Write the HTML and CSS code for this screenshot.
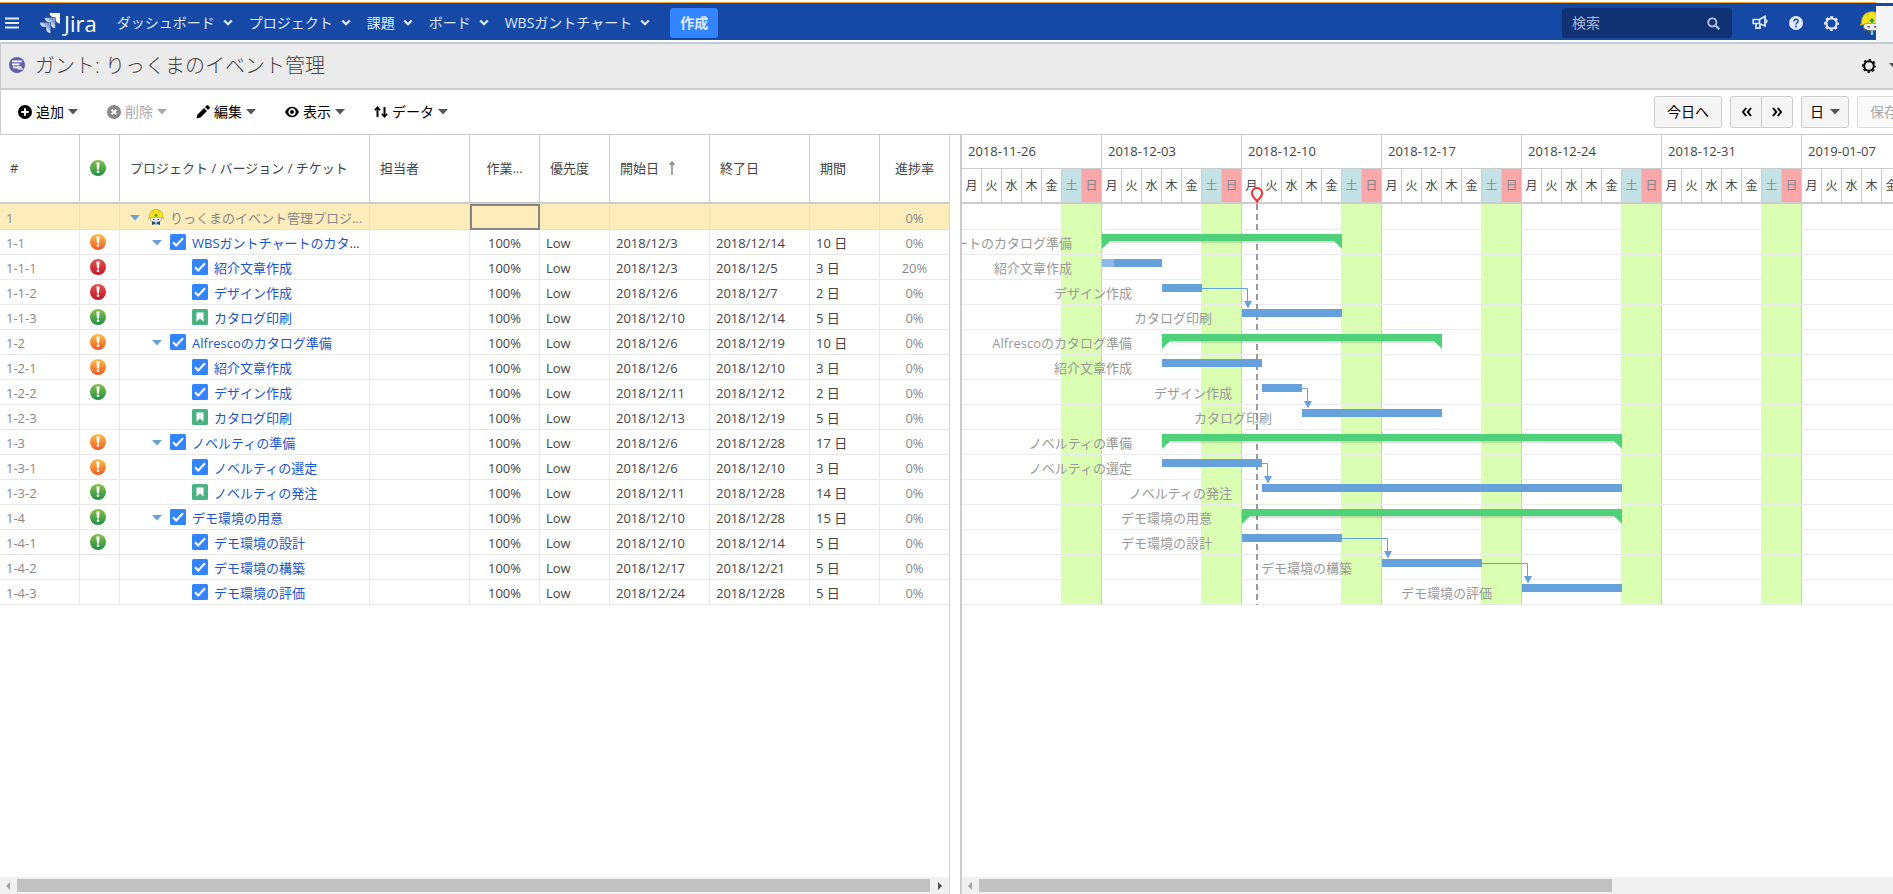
FILE: index.html
```html
<!DOCTYPE html>
<html lang="ja">
<head>
<meta charset="utf-8">
<title>ガント: りっくまのイベント管理</title>
<link rel="stylesheet" href="styles.css">
</head>
<body>
<svg class="defs" aria-hidden="true">
  <defs>
    <linearGradient id="g-green" x1="0" y1="0" x2="0" y2="1"><stop offset="0" stop-color="#8cc04b"/><stop offset="1" stop-color="#1d8f45"/></linearGradient>
    <linearGradient id="g-orange" x1="0" y1="0" x2="0" y2="1"><stop offset="0" stop-color="#fbc04a"/><stop offset="1" stop-color="#ef5a24"/></linearGradient>
    <linearGradient id="g-red" x1="0" y1="0" x2="0" y2="1"><stop offset="0" stop-color="#e2564f"/><stop offset="1" stop-color="#c3142a"/></linearGradient>
    <symbol id="mark" viewBox="0 0 16 16"><path fill="#fff" d="M6.4 2.6h3.2L9 9.4H7z"/><rect x="6.8" y="10.4" width="2.4" height="2.4" rx=".6" fill="#fff"/></symbol>
    <symbol id="ok" viewBox="0 0 16 16"><circle cx="8" cy="8" r="8" fill="url(#g-green)"/><use href="#mark"/></symbol>
    <symbol id="warn" viewBox="0 0 16 16"><circle cx="8" cy="8" r="8" fill="url(#g-orange)"/><use href="#mark"/></symbol>
    <symbol id="late" viewBox="0 0 16 16"><circle cx="8" cy="8" r="8" fill="url(#g-red)"/><use href="#mark"/></symbol>
    <symbol id="task" viewBox="0 0 16 16"><rect width="16" height="16" rx="1.5" fill="#3384ff"/><path d="M3 8.2l3.2 3.3L13 4.2" fill="none" stroke="#fff" stroke-width="2.1"/></symbol>
    <symbol id="story" viewBox="0 0 16 16"><rect width="16" height="16" rx="1.5" fill="#4bb283"/><path d="M4.5 3.6h7v9L8 9.4l-3.5 3.2z" fill="#fff"/><path d="M6.5 5.6h3v3.2L8 7.5 6.500 8.800z" fill="#fff"/></symbol>
    <symbol id="helmet" viewBox="0 0 16 16">
      <path d="M2.500 8h11v3.500L11 13H5l-2.500-1.500z" fill="#eee" stroke="#777" stroke-width=".5"/>
      <path d="M1 8.200C1 3 4 .5 8 .5s7 2.500 7 7.700l1 1.300c-5-1.800-11-1.800-16 0z" fill="#f6e620" stroke="#b5a41c" stroke-width=".6"/>
      <path d="M5.300 1.500v3M10.700 1.500v3" stroke="#b5a41c" stroke-width=".6"/>
      <path d="M8 4.800v3M6.500 6.300h3" stroke="#2ea043" stroke-width="1.300"/>
      <path d="M5 10.500h1.500M9.500 10.500H11" stroke="#444" stroke-width="1"/>
      <path d="M4 12.300l4 1.500 4-1.500V16l-3-1-1 .8-1-.8-3 1z" fill="#254a78"/><path d="M7.200 13h1.600v3H7.200z" fill="#7cc4d8"/>
    </symbol>
    <symbol id="caret" viewBox="0 0 10 6"><path d="M0 0h10L5 5.500z" fill="currentColor"/></symbol>
    <symbol id="chev" viewBox="0 0 10 8"><path d="M1.200 1.500L5 5.300l3.800-3.800" fill="none" stroke="currentColor" stroke-width="2.200"/></symbol>
    <symbol id="gear" viewBox="0 0 14 14"><circle cx="7" cy="7" r="4.800" fill="none" stroke="currentColor" stroke-width="2"/><circle cx="7" cy="7" r="6.200" fill="none" stroke="currentColor" stroke-width="1.600" stroke-dasharray="2.500 2.370" stroke-dashoffset="1.200"/></symbol>
  </defs>
</svg>

<header class="nav">
  <button class="nav-icon menu" aria-label="メニュー"><svg width="14" height="12" viewBox="0 0 14 12"><path d="M0 1.500h14M0 6h14M0 10.500h14" stroke="currentColor" stroke-width="2"/></svg></button>
  <a class="logo" href="#"><svg width="20" height="20" viewBox="0 0 24 24"><defs><linearGradient id="j1" x1="1" y1="0" x2="0" y2="1"><stop offset=".25" stop-color="#fff" stop-opacity=".45"/><stop offset=".65" stop-color="#fff"/></linearGradient></defs><path fill="url(#j1)" d="M11.571 11.513H0a5.218 5.218 0 0 0 5.232 5.215h2.130v2.057A5.215 5.215 0 0 0 12.575 24V12.518a1.005 1.005 0 0 0-1.005-1.005z"/><path fill="url(#j1)" d="M17.294 5.757H5.736a5.215 5.215 0 0 0 5.215 5.214h2.129v2.058a5.218 5.218 0 0 0 5.215 5.214V6.758a1.001 1.001 0 0 0-1.001-1.001z"/><path fill="#fff" d="M23.013 0H11.455a5.215 5.215 0 0 0 5.215 5.215h2.129v2.057A5.215 5.215 0 0 0 24 12.483V1.005A1.001 1.001 0 0 0 23.013 0z"/></svg><span>Jira</span></a>
  <nav class="nav-links">
    <a href="#">ダッシュボード<svg width="10" height="8"><use href="#chev"/></svg></a>
    <a href="#">プロジェクト<svg width="10" height="8"><use href="#chev"/></svg></a>
    <a href="#">課題<svg width="10" height="8"><use href="#chev"/></svg></a>
    <a href="#">ボード<svg width="10" height="8"><use href="#chev"/></svg></a>
    <a href="#">WBSガントチャート<svg width="10" height="8"><use href="#chev"/></svg></a>
  </nav>
  <button class="create">作成</button>
  <div class="search">
    <input type="text" placeholder="検索" aria-label="検索">
    <svg width="13" height="13" viewBox="0 0 13 13"><circle cx="5.300" cy="5.300" r="4.100" fill="none" stroke="currentColor" stroke-width="2.100"/><path d="M8.300 8.300l4 4" stroke="currentColor" stroke-width="2.500"/></svg>
  </div>
  <div class="nav-tools">
    <button class="nav-icon" aria-label="フィードバック"><svg width="16" height="16" viewBox="0 0 16 16"><path d="M1.200 4.500h6.300l5.500-3v9.500l-5.500-2.500H1.200zM7.500 4.500v4M4 8.500v4.700h4V8.700" fill="none" stroke="currentColor" stroke-width="1.700"/><path d="M13.700 4.800c1.600.3 1.600 2.700 0 3" fill="none" stroke="currentColor" stroke-width="1.400"/></svg></button>
    <button class="nav-icon" aria-label="ヘルプ"><svg width="14" height="14" viewBox="0 0 14 14"><circle cx="7" cy="7" r="7" fill="currentColor"/><path d="M4.900 5.400c0-2.800 4.200-2.600 4.200-.2C9.100 6.800 7 6.700 7 8.600" fill="none" stroke="#1549a5" stroke-width="1.500"/><circle cx="7" cy="10.600" r="1" fill="#1549a5"/></svg></button>
    <button class="nav-icon" aria-label="設定"><svg width="15" height="15"><use href="#gear"/></svg></button>
    <button class="nav-icon" aria-label="プロフィール"><svg width="24" height="24"><use href="#helmet"/></svg></button>
  </div>
  <div class="edge"></div>
</header>

<section class="title-bar">
  <svg width="16" height="16" viewBox="0 0 16 16"><circle cx="8" cy="8" r="8" fill="#6260ac"/><path d="M3 4.400h10M3 7.400h7.500" stroke="#fff" stroke-width="1.800"/><path d="M5 8.500v2h4M8.700 9.800h3l1.300 2H9.500z" fill="none" stroke="#fff" stroke-width="1.300"/></svg>
  <h1>ガント: りっくまのイベント管理</h1>
  <button class="plain settings" aria-label="ガント設定"><svg width="14" height="14"><use href="#gear"/></svg><svg class="grey" width="10" height="6"><use href="#caret"/></svg></button>
</section>

<section class="toolbar">
  <button class="plain"><svg width="14" height="14" viewBox="0 0 14 14"><circle cx="7" cy="7" r="7"/><path d="M7 3.300v7.400M3.300 7h7.400" stroke="#fff" stroke-width="2"/></svg>追加<svg class="grey" width="10" height="6"><use href="#caret"/></svg></button>
  <button class="plain" disabled><svg width="14" height="14" viewBox="0 0 14 14"><circle cx="7" cy="7" r="7" fill="#888"/><path d="M4.600 4.600l4.800 4.800M9.400 4.600L4.600 9.400" stroke="#fff" stroke-width="2"/></svg>削除<svg width="10" height="6"><use href="#caret"/></svg></button>
  <button class="plain"><svg width="14" height="14" viewBox="0 0 14 14"><path d="M.5 13.500l1-4L8 3l3 3-6.500 6.500zM9 2l1.500-1.500c.5-.5 1.200-.5 1.700 0l1.300 1.300c.5.5.5 1.200 0 1.700L12 5z"/></svg>編集<svg class="grey" width="10" height="6"><use href="#caret"/></svg></button>
  <button class="plain"><svg width="14" height="14" viewBox="0 0 14 14"><path d="M0 7c3-7 11-7 14 0-3 7-11 7-14 0z"/><circle cx="7" cy="7" r="2.800" fill="none" stroke="#fff" stroke-width="1.700"/></svg>表示<svg class="grey" width="10" height="6"><use href="#caret"/></svg></button>
  <button class="plain"><svg width="14" height="14" viewBox="0 0 14 14"><path d="M3.500 12V3M10.500 2v9" stroke="#000" stroke-width="2"/><path d="M.8 5.300L3.500 2.200l2.700 3.100M7.800 8.700l2.700 3.100 2.700-3.100" fill="none" stroke="#000" stroke-width="1.700"/></svg>データ<svg class="grey" width="10" height="6"><use href="#caret"/></svg></button>
  <div class="range">
    <button class="btn today-btn">今日へ</button>
    <div class="pair">
      <button class="btn" aria-label="前へ"><svg width="11" height="10" viewBox="0 0 11 10"><path d="M5.200 1L2 5l3.200 4M10 1L6.800 5 10 9" fill="none" stroke="#000" stroke-width="2"/></svg></button>
      <button class="btn" aria-label="次へ"><svg width="11" height="10" viewBox="0 0 11 10"><path d="M1 1l3.200 4L1 9M5.800 1L9 5 5.800 9" fill="none" stroke="#000" stroke-width="2"/></svg></button>
    </div>
    <button class="btn unit">日<svg class="grey" width="10" height="6"><use href="#caret"/></svg></button>
    <button class="btn save" disabled>保存</button>
  </div>
</section>

<main class="panes">
  <section class="grid-pane">
    <table class="grid">
      <colgroup><col class="w80"><col class="w40"><col class="w250"><col class="w100"><col class="w70"><col class="w70"><col class="w100"><col class="w100"><col class="w70"><col></colgroup>
      <thead>
        <tr><th>#</th><th><svg class="status" width="16" height="16"><use href="#ok"/></svg></th><th>プロジェクト / バージョン / チケット</th><th>担当者</th><th class="mid">作業...</th><th>優先度</th><th><span class="sorted">開始日<svg width="6" height="14" viewBox="0 0 6 14"><path d="M3 14V2M.5 4L3 1l2.500 3" fill="none" stroke="#888" stroke-width="1.500"/></svg></span></th><th>終了日</th><th>期間</th><th class="mid">進捗率</th></tr>
      </thead>
      <tbody>
        <tr class="selected"><td>1</td><td></td><td><div class="name l0"><svg class="twist" width="10" height="6"><use href="#caret"/></svg><svg width="16" height="16"><use href="#helmet"/></svg><span>りっくまのイベント管理プロジェクト</span></div></td><td></td><td class="cursor"></td><td></td><td></td><td></td><td></td><td>0%</td></tr>
        <tr><td>1-1</td><td><svg class="status" width="16" height="16"><use href="#warn"/></svg></td><td><div class="name l1"><svg class="twist" width="10" height="6"><use href="#caret"/></svg><svg width="16" height="16"><use href="#task"/></svg><span><a href="#">WBSガントチャートのカタログ準備</a></span></div></td><td></td><td>100%</td><td>Low</td><td>2018/12/3</td><td>2018/12/14</td><td>10 日</td><td>0%</td></tr>
        <tr><td>1-1-1</td><td><svg class="status" width="16" height="16"><use href="#late"/></svg></td><td><div class="name l2"><svg width="16" height="16"><use href="#task"/></svg><span><a href="#">紹介文章作成</a></span></div></td><td></td><td>100%</td><td>Low</td><td>2018/12/3</td><td>2018/12/5</td><td>3 日</td><td>20%</td></tr>
        <tr><td>1-1-2</td><td><svg class="status" width="16" height="16"><use href="#late"/></svg></td><td><div class="name l2"><svg width="16" height="16"><use href="#task"/></svg><span><a href="#">デザイン作成</a></span></div></td><td></td><td>100%</td><td>Low</td><td>2018/12/6</td><td>2018/12/7</td><td>2 日</td><td>0%</td></tr>
        <tr><td>1-1-3</td><td><svg class="status" width="16" height="16"><use href="#ok"/></svg></td><td><div class="name l2"><svg width="16" height="16"><use href="#story"/></svg><span><a href="#">カタログ印刷</a></span></div></td><td></td><td>100%</td><td>Low</td><td>2018/12/10</td><td>2018/12/14</td><td>5 日</td><td>0%</td></tr>
        <tr><td>1-2</td><td><svg class="status" width="16" height="16"><use href="#warn"/></svg></td><td><div class="name l1"><svg class="twist" width="10" height="6"><use href="#caret"/></svg><svg width="16" height="16"><use href="#task"/></svg><span><a href="#">Alfrescoのカタログ準備</a></span></div></td><td></td><td>100%</td><td>Low</td><td>2018/12/6</td><td>2018/12/19</td><td>10 日</td><td>0%</td></tr>
        <tr><td>1-2-1</td><td><svg class="status" width="16" height="16"><use href="#warn"/></svg></td><td><div class="name l2"><svg width="16" height="16"><use href="#task"/></svg><span><a href="#">紹介文章作成</a></span></div></td><td></td><td>100%</td><td>Low</td><td>2018/12/6</td><td>2018/12/10</td><td>3 日</td><td>0%</td></tr>
        <tr><td>1-2-2</td><td><svg class="status" width="16" height="16"><use href="#ok"/></svg></td><td><div class="name l2"><svg width="16" height="16"><use href="#task"/></svg><span><a href="#">デザイン作成</a></span></div></td><td></td><td>100%</td><td>Low</td><td>2018/12/11</td><td>2018/12/12</td><td>2 日</td><td>0%</td></tr>
        <tr><td>1-2-3</td><td></td><td><div class="name l2"><svg width="16" height="16"><use href="#story"/></svg><span><a href="#">カタログ印刷</a></span></div></td><td></td><td>100%</td><td>Low</td><td>2018/12/13</td><td>2018/12/19</td><td>5 日</td><td>0%</td></tr>
        <tr><td>1-3</td><td><svg class="status" width="16" height="16"><use href="#warn"/></svg></td><td><div class="name l1"><svg class="twist" width="10" height="6"><use href="#caret"/></svg><svg width="16" height="16"><use href="#task"/></svg><span><a href="#">ノベルティの準備</a></span></div></td><td></td><td>100%</td><td>Low</td><td>2018/12/6</td><td>2018/12/28</td><td>17 日</td><td>0%</td></tr>
        <tr><td>1-3-1</td><td><svg class="status" width="16" height="16"><use href="#warn"/></svg></td><td><div class="name l2"><svg width="16" height="16"><use href="#task"/></svg><span><a href="#">ノベルティの選定</a></span></div></td><td></td><td>100%</td><td>Low</td><td>2018/12/6</td><td>2018/12/10</td><td>3 日</td><td>0%</td></tr>
        <tr><td>1-3-2</td><td><svg class="status" width="16" height="16"><use href="#ok"/></svg></td><td><div class="name l2"><svg width="16" height="16"><use href="#story"/></svg><span><a href="#">ノベルティの発注</a></span></div></td><td></td><td>100%</td><td>Low</td><td>2018/12/11</td><td>2018/12/28</td><td>14 日</td><td>0%</td></tr>
        <tr><td>1-4</td><td><svg class="status" width="16" height="16"><use href="#ok"/></svg></td><td><div class="name l1"><svg class="twist" width="10" height="6"><use href="#caret"/></svg><svg width="16" height="16"><use href="#task"/></svg><span><a href="#">デモ環境の用意</a></span></div></td><td></td><td>100%</td><td>Low</td><td>2018/12/10</td><td>2018/12/28</td><td>15 日</td><td>0%</td></tr>
        <tr><td>1-4-1</td><td><svg class="status" width="16" height="16"><use href="#ok"/></svg></td><td><div class="name l2"><svg width="16" height="16"><use href="#task"/></svg><span><a href="#">デモ環境の設計</a></span></div></td><td></td><td>100%</td><td>Low</td><td>2018/12/10</td><td>2018/12/14</td><td>5 日</td><td>0%</td></tr>
        <tr><td>1-4-2</td><td></td><td><div class="name l2"><svg width="16" height="16"><use href="#task"/></svg><span><a href="#">デモ環境の構築</a></span></div></td><td></td><td>100%</td><td>Low</td><td>2018/12/17</td><td>2018/12/21</td><td>5 日</td><td>0%</td></tr>
        <tr><td>1-4-3</td><td></td><td><div class="name l2"><svg width="16" height="16"><use href="#task"/></svg><span><a href="#">デモ環境の評価</a></span></div></td><td></td><td>100%</td><td>Low</td><td>2018/12/24</td><td>2018/12/28</td><td>5 日</td><td>0%</td></tr>
      </tbody>
    </table>
    <div class="scroll">
      <svg class="arrow dim" width="4" height="8" viewBox="0 0 4 8"><path d="M4 0v8L0 4z" fill="currentColor"/></svg>
      <div class="thumb full"></div>
      <svg class="arrow" width="4" height="8" viewBox="0 0 4 8"><path d="M0 0v8l4-4z" fill="currentColor"/></svg>
    </div>
  </section>

  <section class="chart-pane">
    <div class="calendar">
      <div class="week"><div class="date">2018-11-26</div><div class="days"><span>月</span><span>火</span><span>水</span><span>木</span><span>金</span><span class="sat">土</span><span class="sun">日</span></div></div>
      <div class="week"><div class="date">2018-12-03</div><div class="days"><span>月</span><span>火</span><span>水</span><span>木</span><span>金</span><span class="sat">土</span><span class="sun">日</span></div></div>
      <div class="week"><div class="date">2018-12-10</div><div class="days"><span>月</span><span>火</span><span>水</span><span>木</span><span>金</span><span class="sat">土</span><span class="sun">日</span></div></div>
      <div class="week"><div class="date">2018-12-17</div><div class="days"><span>月</span><span>火</span><span>水</span><span>木</span><span>金</span><span class="sat">土</span><span class="sun">日</span></div></div>
      <div class="week"><div class="date">2018-12-24</div><div class="days"><span>月</span><span>火</span><span>水</span><span>木</span><span>金</span><span class="sat">土</span><span class="sun">日</span></div></div>
      <div class="week"><div class="date">2018-12-31</div><div class="days"><span>月</span><span>火</span><span>水</span><span>木</span><span>金</span><span class="sat">土</span><span class="sun">日</span></div></div>
      <div class="week"><div class="date">2019-01-07</div><div class="days"><span>月</span><span>火</span><span>水</span><span>木</span><span>金</span></div></div>
    </div>
    <div class="canvas">
      <div class="row first"></div>
      <div class="row" style="--start:7;--days:12"><span class="label">WBSガントチャートのカタログ準備</span><i class="bar group"></i></div>
      <div class="row" style="--start:7;--days:3"><span class="label">紹介文章作成</span><i class="bar"><b class="done" style="width:20%"></b></i></div>
      <div class="row" style="--start:10;--days:2"><span class="label">デザイン作成</span><i class="bar"></i></div>
      <div class="row" style="--start:14;--days:5"><span class="label">カタログ印刷</span><i class="bar"></i></div>
      <div class="row" style="--start:10;--days:14"><span class="label">Alfrescoのカタログ準備</span><i class="bar group"></i></div>
      <div class="row" style="--start:10;--days:5"><span class="label">紹介文章作成</span><i class="bar"></i></div>
      <div class="row" style="--start:15;--days:2"><span class="label">デザイン作成</span><i class="bar"></i></div>
      <div class="row" style="--start:17;--days:7"><span class="label">カタログ印刷</span><i class="bar"></i></div>
      <div class="row" style="--start:10;--days:23"><span class="label">ノベルティの準備</span><i class="bar group"></i></div>
      <div class="row" style="--start:10;--days:5"><span class="label">ノベルティの選定</span><i class="bar"></i></div>
      <div class="row" style="--start:15;--days:18"><span class="label">ノベルティの発注</span><i class="bar"></i></div>
      <div class="row" style="--start:14;--days:19"><span class="label">デモ環境の用意</span><i class="bar group"></i></div>
      <div class="row" style="--start:14;--days:5"><span class="label">デモ環境の設計</span><i class="bar"></i></div>
      <div class="row" style="--start:21;--days:5"><span class="label">デモ環境の構築</span><i class="bar"></i></div>
      <div class="row" style="--start:28;--days:5"><span class="label">デモ環境の評価</span><i class="bar"></i></div>
      <svg class="today" width="14" height="420" viewBox="0 0 14 420"><path d="M7 18v401" stroke="#999" stroke-width="2" stroke-dasharray="6 4"/><path d="M7 15.500C5.500 12.500 1.800 11 1.800 7.300a5.200 5.200 0 0 1 10.400 0C12.200 11 8.500 12.500 7 15.500z" fill="#fff" stroke="#f23030" stroke-width="2"/></svg>
      <svg class="links" width="700" height="401" viewBox="0 0 700 401">
        <g fill="none" stroke="#67a1dc"><path d="M240 84.500h45.500V98"/><path d="M340 184.500h5.500V198"/><path d="M300 259.500h5.500V273"/><path d="M380 334.500h45.500V348"/><path d="M520 359.500h45.500V373"/></g>
        <g fill="#67a1dc"><path d="M282 97h8l-4 7.500z"/><path d="M342 197h8l-4 7.500z"/><path d="M302 272h8l-4 7.500z"/><path d="M422 347h8l-4 7.500z"/><path d="M562 372h8l-4 7.500z"/></g>
      </svg>
    </div>
    <div class="scroll">
      <svg class="arrow dim" width="4" height="8" viewBox="0 0 4 8"><path d="M4 0v8L0 4z" fill="currentColor"/></svg>
      <div class="thumb part"></div>
    </div>
  </section>
</main>
</body>
</html>
```

FILE: styles.css
```css
* { box-sizing: border-box; }
html, body { margin: 0; height: 100%; }
body {
  display: flex;
  flex-direction: column;
  overflow: hidden;
  background: #fff;
  color: #444;
  font: 13px/24px "Open Sans", "Noto Sans CJK JP", sans-serif;
}
button, input { font: inherit; color: inherit; }
a { color: #1a56cc; text-decoration: none; }
svg { display: block; flex: none; }
.defs { position: absolute; width: 0; height: 0; }

/* Global navigation */
.nav {
  position: relative;
  flex: none;
  display: flex;
  align-items: center;
  height: 40px;
  margin-bottom: 2px;
  padding: 6px 0 0 5px;
  background: linear-gradient(#fff 2px, #f5a623 2px, #f5a623 3px, #1549a5 3px);
  color: #deebff;
  font-size: 14px;
}
.nav-icon { display: block; padding: 0; border: 0; background: none; }
.logo { display: flex; align-items: center; gap: 4px; margin-left: 21px; color: #fff; font: 22px/24px "Open Sans", sans-serif; }
.nav-links { display: flex; gap: 16px; margin-left: 20px; }
.nav-links a { display: flex; align-items: center; gap: 8px; color: #deebff; }
.create {
  height: 30px;
  margin-left: 20px;
  padding: 0 10px;
  border: 0;
  border-radius: 3px;
  background: #3384ff;
  font-weight: 700;
}
.search {
  display: flex;
  align-items: center;
  width: 170px;
  height: 30px;
  margin-left: auto;
  padding: 0 12px 0 10px;
  border-radius: 3px;
  background: #123172;
  color: #a9b8d6;
}
.search input { flex: 1; min-width: 0; padding: 0; border: 0; background: none; outline: 0; }
.search input::placeholder { color: #a9b8d6; opacity: 1; }
.nav-tools { display: flex; align-items: center; gap: 21px; margin: 0 9px 0 20px; }
.edge {
  position: absolute;
  top: 0;
  right: 0;
  width: 17px;
  height: 42px;
  background: linear-gradient(#fff 3px, #1549a5 3px, #1549a5 6px, #f4f5f7 6px);
}

/* Title */
.title-bar {
  flex: none;
  display: flex;
  align-items: center;
  height: 48px;
  padding: 0 0 0 8px;
  border: solid #ccc;
  border-width: 2px 0 2px 1px;
  border-top-color: #c4c9d6;
  background: #ebebeb;
}
.title-bar > svg { margin-bottom: 3px; }
.title-bar h1 { margin: 0 0 0 10px; font-size: 20px; font-weight: 300; line-height: 30px; }
.plain {
  display: flex;
  align-items: center;
  gap: 4px;
  padding: 0;
  border: 0;
  background: none;
  color: #000;
  font-size: 14px;
}
.plain:disabled { color: #aaa; }
.settings { gap: 13px; margin: 0 -6px 0 auto; }
.grey { color: #555; }

/* Toolbar */
.toolbar {
  flex: none;
  display: flex;
  align-items: center;
  gap: 29px;
  height: 45px;
  padding-left: 17px;
  border: solid #ccc;
  border-width: 0 0 1px 1px;
}
.range { display: flex; gap: 8px; margin: 0 -22px 0 auto; }
.btn {
  display: flex;
  align-items: center;
  justify-content: center;
  height: 32px;
  padding: 0 8px;
  border: 1px solid #ccc;
  border-radius: 3px;
  background: #f5f5f5;
  color: #000;
  font-size: 14px;
}
.today-btn { padding: 0 12px; }
.pair { display: flex; }
.pair .btn { width: 32px; }
.pair .btn:first-child { border-radius: 3px 0 0 3px; }
.pair .btn:last-child { margin-left: -1px; border-radius: 0 3px 3px 0; }
.unit { width: 48px; gap: 6px; }
.save { width: 58px; justify-content: flex-start; padding: 0 12px; border-color: #ddd; background: #fafafa; color: #aaa; }

/* Panes */
.panes { flex: 1; display: flex; gap: 10px; min-height: 0; }
.grid-pane { flex: none; display: flex; flex-direction: column; border-right: 1px solid #d5d5d5; }
.chart-pane { flex: 1; min-width: 0; display: flex; flex-direction: column; overflow: hidden; border-left: 2px solid #ccc; }

.grid { width: 949px; table-layout: fixed; border-collapse: separate; border-spacing: 0; }
.w40 { width: 40px; }
.w70 { width: 70px; }
.w80 { width: 80px; }
.w100 { width: 100px; }
.w250 { width: 250px; }
.grid th {
  height: 69px;
  padding: 0 10px 2px;
  border: solid #ccc;
  border-width: 0 1px 2px 0;
  font-weight: 400;
  text-align: left;
  white-space: nowrap;
}
.grid td {
  height: 25px;
  padding: 2px 6px 0;
  border: solid #e8e8e8;
  border-width: 0 1px 1px 0;
  line-height: 22px;
  white-space: nowrap;
}
.grid tr > :last-child { border-right: 0; }
.grid td:first-child { color: #888; }
.grid td:nth-child(2) { padding: 0 10px; }
.grid td:nth-child(3) { padding: 2px 5px 0 10px; }
.grid td:nth-child(5) { text-align: center; }
.grid td:last-child { color: #888; text-align: center; }
.grid th.mid { padding: 0 0 2px; text-align: center; }
.sorted { display: flex; align-items: center; gap: 10px; }
.name { display: flex; align-items: center; gap: 6px; }
.name > svg { margin-bottom: 2px; }
.name span { min-width: 0; overflow: hidden; text-overflow: ellipsis; }
.name > .twist { margin: 0 2px 0 0; color: #67a1dc; }
.l1 { padding-left: 22px; }
.l2 { padding-left: 62px; }
.grid .selected td { height: 26px; border-color: #f5e3ac; background: #feedbb; color: #888; }
.grid .selected .cursor { outline: 2px solid #858585; outline-offset: -2px; }

/* Calendar header */
.calendar { flex: none; display: flex; height: 69px; border-bottom: 2px solid #ccc; }
.week { flex: none; width: 140px; border-right: 1px solid #ccc; }
.date { height: 34px; padding-left: 6px; border-bottom: 1px solid #ccc; line-height: 32px; }
.days { display: flex; height: 33px; margin-right: -1px; font-size: 12px; line-height: 34px; text-align: center; }
.days span { width: 20px; border-right: 1px solid #ccc; }
.days .sat { background: #c4e2e6; color: #888; }
.days .sun { background: #faa7a9; color: #888; }

/* Chart */
.canvas {
  position: relative;
  background: repeating-linear-gradient(90deg, #fff 0, #fff 99px, #daffb3 99px, #daffb3 139px, #ccc 139px, #ccc 140px);
}
.row { position: relative; height: 25px; border-bottom: 1px solid #ebebeb; }
.first { height: 26px; }
.label {
  position: absolute;
  top: 0;
  left: 0;
  display: flex;
  justify-content: flex-end;
  width: calc(var(--start) * 20px - 30px);
  overflow: hidden;
  color: #999;
  line-height: 26px;
  white-space: nowrap;
}
.bar {
  position: absolute;
  z-index: 2;
  top: 4px;
  left: calc(var(--start) * 20px);
  width: calc(var(--days) * 20px);
  height: 8px;
  background: #67a1dc;
}
.done { display: block; height: 8px; background: #8dbbeb; }
.group { height: 7px; background: #4fd179; box-shadow: 0 2px 2px rgba(0, 0, 0, .15); }
.group::before, .group::after { content: ""; position: absolute; top: 7px; border-top: 8px solid #4fd179; }
.group::before { left: 0; border-right: 8px solid transparent; }
.group::after { right: 0; border-left: 8px solid transparent; }
.today { position: absolute; z-index: 1; top: -18px; left: 288px; }
.links { position: absolute; z-index: 3; top: 0; left: 0; }

/* Scrollbars */
.scroll { flex: none; display: flex; align-items: center; height: 17px; margin-top: auto; background: #f1f1f1; }
.arrow { margin: 0 7px 0 6px; color: #505050; }
.dim { color: #a3a3a3; }
.thumb { height: 13px; background: #c1c1c1; }
.full { flex: 1; margin-right: 2px; }
.part { width: 68%; }
```
